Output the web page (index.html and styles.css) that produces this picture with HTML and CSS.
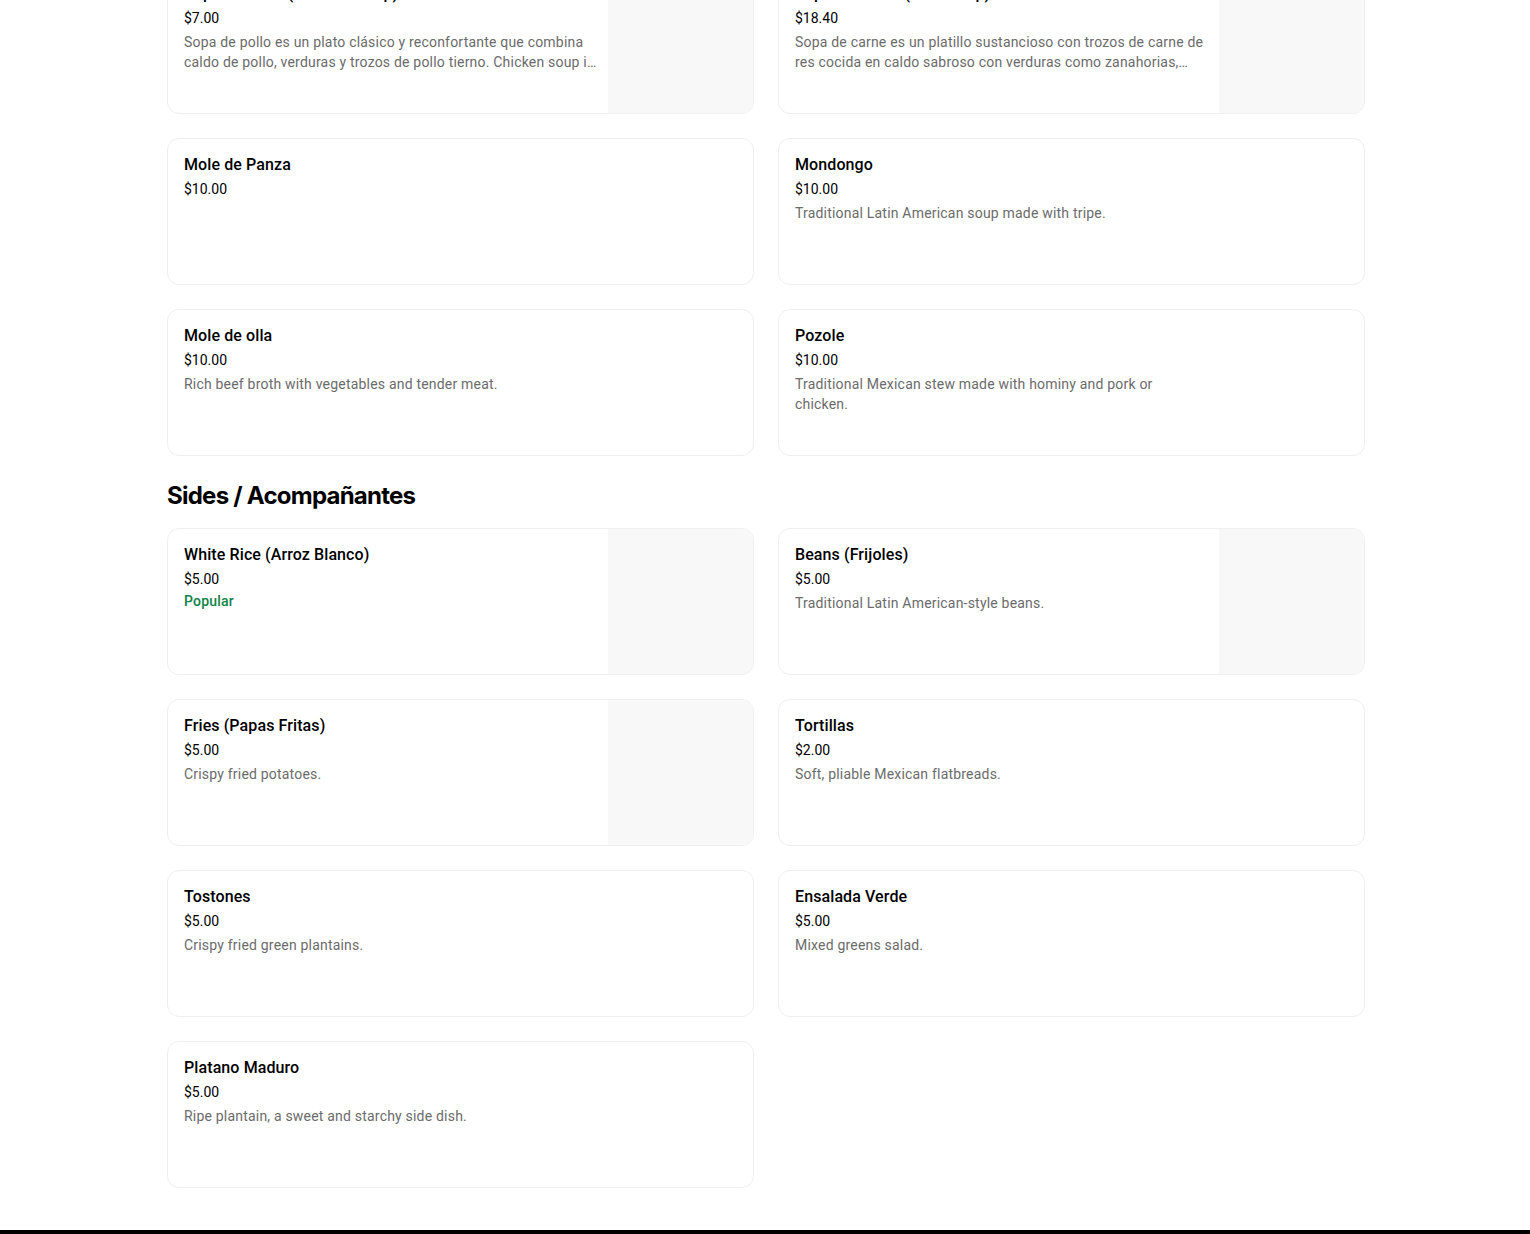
FILE: index.html
```html
<!DOCTYPE html>
<html lang="es">
<head>
<meta charset="utf-8">
<title>Menu</title>
<link rel="stylesheet" href="styles.css">
</head>
<body>
<main class="menu">
  <section class="section">
    <div class="grid">
      <div class="card">
        <div class="info">
          <div class="title">Sopa de Pollo (Chicken Soup)</div>
          <div class="price">$7.00</div>
          <div class="desc">Sopa de pollo es un plato clásico y reconfortante que combina caldo de pollo, verduras y trozos de pollo tierno. Chicken soup is a classic and comforting dish that combines chicken broth, vegetables and tender pieces of chicken.</div>
        </div>
        <div class="thumb filled"></div>
      </div>
      <div class="card">
        <div class="info">
          <div class="title">Sopa de Carne (Beef Soup)</div>
          <div class="price">$18.40</div>
          <div class="desc">Sopa de carne es un platillo sustancioso con trozos de carne de res cocida en caldo sabroso con verduras como zanahorias, papas y elote.</div>
        </div>
        <div class="thumb filled"></div>
      </div>
      <div class="card">
        <div class="info">
          <div class="title">Mole de Panza</div>
          <div class="price">$10.00</div>
        </div>
        <div class="thumb"></div>
      </div>
      <div class="card">
        <div class="info">
          <div class="title">Mondongo</div>
          <div class="price">$10.00</div>
          <div class="desc">Traditional Latin American soup made with tripe.</div>
        </div>
        <div class="thumb"></div>
      </div>
      <div class="card">
        <div class="info">
          <div class="title">Mole de olla</div>
          <div class="price">$10.00</div>
          <div class="desc">Rich beef broth with vegetables and tender meat.</div>
        </div>
        <div class="thumb"></div>
      </div>
      <div class="card">
        <div class="info">
          <div class="title">Pozole</div>
          <div class="price">$10.00</div>
          <div class="desc">Traditional Mexican stew made with hominy and pork or chicken.</div>
        </div>
        <div class="thumb"></div>
      </div>
    </div>
  </section>

  <section class="section">
    <h2 class="section-title">Sides / Acompañantes</h2>
    <div class="grid">
      <div class="card">
        <div class="info">
          <div class="title">White Rice (Arroz Blanco)</div>
          <div class="price">$5.00</div>
          <div class="badge">Popular</div>
        </div>
        <div class="thumb filled"></div>
      </div>
      <div class="card">
        <div class="info">
          <div class="title">Beans (Frijoles)</div>
          <div class="price">$5.00</div>
          <div class="desc">Traditional Latin American-style beans.</div>
        </div>
        <div class="thumb filled"></div>
      </div>
      <div class="card">
        <div class="info">
          <div class="title">Fries (Papas Fritas)</div>
          <div class="price">$5.00</div>
          <div class="desc">Crispy fried potatoes.</div>
        </div>
        <div class="thumb filled"></div>
      </div>
      <div class="card">
        <div class="info">
          <div class="title">Tortillas</div>
          <div class="price">$2.00</div>
          <div class="desc">Soft, pliable Mexican flatbreads.</div>
        </div>
        <div class="thumb"></div>
      </div>
      <div class="card">
        <div class="info">
          <div class="title">Tostones</div>
          <div class="price">$5.00</div>
          <div class="desc">Crispy fried green plantains.</div>
        </div>
        <div class="thumb"></div>
      </div>
      <div class="card">
        <div class="info">
          <div class="title">Ensalada Verde</div>
          <div class="price">$5.00</div>
          <div class="desc">Mixed greens salad.</div>
        </div>
        <div class="thumb"></div>
      </div>
      <div class="card">
        <div class="info">
          <div class="title">Platano Maduro</div>
          <div class="price">$5.00</div>
          <div class="desc">Ripe plantain, a sweet and starchy side dish.</div>
        </div>
        <div class="thumb"></div>
      </div>
    </div>
  </section>
</main>
<footer class="footer"></footer>
</body>
</html>
```

FILE: styles.css
```css
html, body {
  margin: 0;
  padding: 0;
  background: #ffffff;
}

body {
  font-family: Roboto, "Liberation Sans", Arial, sans-serif;
  color: #000000;
}

.menu {
  width: 1198px;
  margin: -33px 0 0 167px;
  padding: 0 0 42px;
}

.section-title {
  margin: 24px 0 16px;
  font-family: Inter, "Liberation Sans", sans-serif;
  font-size: 24px;
  line-height: 32px;
  font-weight: 700;
  letter-spacing: -0.75px;
}

.grid {
  display: grid;
  grid-template-columns: 1fr 1fr;
  column-gap: 24px;
  row-gap: 24px;
}

.card {
  display: flex;
  height: 147px;
  box-sizing: border-box;
  border: 1px solid #efefef;
  border-radius: 12px;
  overflow: hidden;
  background: #ffffff;
}

.info {
  flex: 1;
  min-width: 0;
  padding: 16px 10px 16px 16px;
}

.thumb {
  flex: 0 0 145px;
  height: 100%;
}

.thumb.filled {
  background: #f8f8f8;
}

.title {
  font-size: 16px;
  line-height: 20px;
  font-weight: 500;
  letter-spacing: 0.1px;
  color: #000000;
}

.price {
  margin-top: 4px;
  font-size: 14px;
  line-height: 20px;
  color: #000000;
}

.desc {
  margin-top: 4px;
  font-size: 14px;
  line-height: 20px;
  letter-spacing: 0.2px;
  color: #6b6b6b;
  display: -webkit-box;
  -webkit-line-clamp: 2;
  -webkit-box-orient: vertical;
  overflow: hidden;
}

.badge {
  margin-top: 2px;
  font-size: 14px;
  line-height: 20px;
  font-weight: 500;
  letter-spacing: 0.2px;
  color: #0e8345;
}

.footer {
  height: 300px;
  background: #000000;
}
```
